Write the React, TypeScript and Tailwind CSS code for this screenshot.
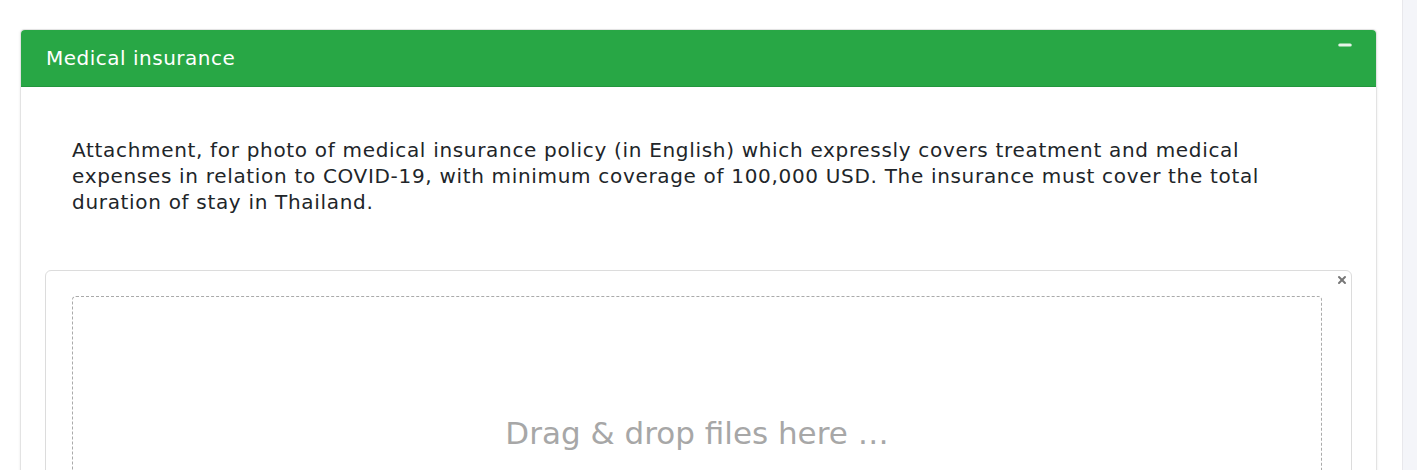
import { Minus, X } from "lucide-react";

export default function App() {
  return (
    <div className="flex h-[470px] w-full overflow-hidden bg-white font-['DejaVu_Sans',sans-serif]">
      <div className="flex-1 pt-[29px] pl-[20px] pr-[25px]">
        <div className="rounded-[4px] border border-[#e3e3e3] shadow-[0_1px_3px_rgba(0,0,0,0.08)]">
          <div className="flex h-[57px] items-center justify-between rounded-t-[4px] border-b border-[#23963d] bg-[#28a745] pl-[25px] pr-[22px]">
            <h2 className="text-[20px] tracking-[0.5px] text-white">Medical insurance</h2>
            <Minus className="-mt-[26px] h-[18px] w-[18px] text-[#e5f3e8]" strokeWidth={4} />
          </div>
          <div className="px-[24px] pt-[50px]">
            <p className="pl-[27px] pr-[40px] text-[20px] leading-[26px] tracking-[0.68px] text-[#212529]">
              Attachment, for photo of medical insurance policy (in English) which expressly covers treatment and
              medical expenses in relation to COVID-19, with minimum coverage of 100,000 USD. The insurance must cover
              the total duration of stay in Thailand.
            </p>
            <div className="relative mt-[55px] rounded-[6px] border border-[#dcdcdc] pt-[25px] pl-[26px] pr-[29px]">
              <X className="absolute right-[3px] top-[3px] h-[12px] w-[12px] text-[#777]" strokeWidth={4} />
              <div className="flex h-[300px] justify-center rounded-[4px] border border-dashed border-[#aaa] pt-[113px]">
                <span className="text-[31px] text-[#a7a7a7]">Drag &amp; drop files here …</span>
              </div>
            </div>
          </div>
        </div>
      </div>
      <div className="w-[15px] border-l border-[#e8e8ec] bg-[#f4f5f9]" />
    </div>
  );
}
